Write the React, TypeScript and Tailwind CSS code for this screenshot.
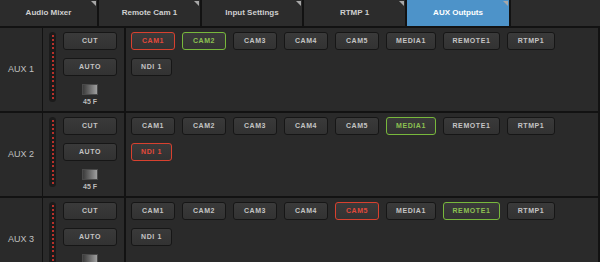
const tabs = [
  { label: 'Audio Mixer', w: 'w-[99px]' },
  { label: 'Remote Cam 1', w: 'w-[103px]' },
  { label: 'Input Settings', w: 'w-[102px]' },
  { label: 'RTMP 1', w: 'w-[103px]' },
  { label: 'AUX Outputs', w: 'w-[104px]', active: true },
]

type State = 'red' | 'green' | undefined

const sources: { label: string; w: string }[] = [
  { label: 'CAM1', w: 'w-[44px]' },
  { label: 'CAM2', w: 'w-[44px]' },
  { label: 'CAM3', w: 'w-[44px]' },
  { label: 'CAM4', w: 'w-[44px]' },
  { label: 'CAM5', w: 'w-[44px]' },
  { label: 'MEDIA1', w: 'w-[50px]' },
  { label: 'REMOTE1', w: 'w-[57px]' },
  { label: 'RTMP1', w: 'w-[48px]' },
]

const rows: { name: string; red: string; green?: string }[] = [
  { name: 'AUX 1', red: 'CAM1', green: 'CAM2' },
  { name: 'AUX 2', red: 'NDI 1', green: 'MEDIA1' },
  { name: 'AUX 3', red: 'CAM5', green: 'REMOTE1' },
]

function Btn({ label, w, state }: { label: string; w: string; state?: State }) {
  const tone =
    state === 'red'
      ? 'border-[#d8412f] text-[#e2493a]'
      : state === 'green'
        ? 'border-[#78b83c] text-[#8cc152]'
        : 'border-[#161616] text-[#c4c4c4]'
  return (
    <div
      className={`${w} flex h-[18px] items-center justify-center rounded-[3px] border bg-gradient-to-b from-[#3a3a3a] to-[#323232] text-[7px] font-bold tracking-[0.6px] ${tone}`}
    >
      {label}
    </div>
  )
}

// level meter: dark pill with a column of red dots
function Meter() {
  return (
    <div className="flex h-[70px] w-[7px] flex-col items-center justify-between rounded-full bg-[#1b1b1b] py-[3px]">
      {Array.from({ length: 16 }).map((_, i) => (
        <span key={i} className="h-[2px] w-[2px] bg-[#b8302a]" />
      ))}
    </div>
  )
}

function AuxRow({ name, red, green }: { name: string; red: string; green?: string }) {
  const stateOf = (l: string): State => (l === red ? 'red' : l === green ? 'green' : undefined)
  return (
    <div className="flex h-[85px] border-b-2 border-[#121212]">
      <div className="flex w-[43px] items-center justify-center border-r border-[#121212] text-[9px] text-[#c0c0c0]">
        {name}
      </div>
      <div className="flex w-[83px] border-r-2 border-[#121212] pl-[6px] pt-[4px]">
        <Meter />
        <div className="ml-[7px] flex w-[54px] flex-col items-center gap-[8px]">
          <Btn label="CUT" w="w-[54px]" />
          <Btn label="AUTO" w="w-[54px]" />
          <div className="flex flex-col items-center">
            <div className="h-[11px] w-[16px] border border-[#4a4a4a] bg-gradient-to-r from-[#3c3c3c] to-[#a0a0a0]" />
            <div className="mt-[2px] text-[7px] font-bold leading-[9px] text-[#bbbbbb]">45 F</div>
          </div>
        </div>
      </div>
      <div className="flex flex-1 flex-col gap-[8px] pl-[5px] pt-[4px]">
        <div className="flex gap-[7px]">
          {sources.map((s) => (
            <Btn key={s.label} label={s.label} w={s.w} state={stateOf(s.label)} />
          ))}
        </div>
        <div className="flex gap-[7px]">
          <Btn label="NDI 1" w="w-[41px]" state={stateOf('NDI 1')} />
        </div>
      </div>
    </div>
  )
}

export default function App() {
  return (
    <div className="h-[262px] w-[600px] overflow-hidden bg-[#2a2a2a] font-['Liberation_Sans',Arial,sans-serif]">
      <div className="flex h-[28px] border-b-2 border-[#121212] bg-[#2c2c2c]">
        {tabs.map((t) => (
          <div
            key={t.label}
            className={`${t.w} relative flex items-center justify-center border-r-2 border-[#121212] text-[8px] font-bold ${
              t.active ? 'bg-[#4d93c9] text-white' : 'text-[#cfcfcf]'
            }`}
          >
            {t.label}
            <span className="absolute right-[1px] top-[1px] h-0 w-0 border-l-[5px] border-t-[5px] border-l-transparent border-t-[#a8a8a8]" />
          </div>
        ))}
      </div>
      <div className="w-[600px] border-r-2 border-[#121212]">
        {rows.map((r) => (
          <AuxRow key={r.name} {...r} />
        ))}
      </div>
    </div>
  )
}
